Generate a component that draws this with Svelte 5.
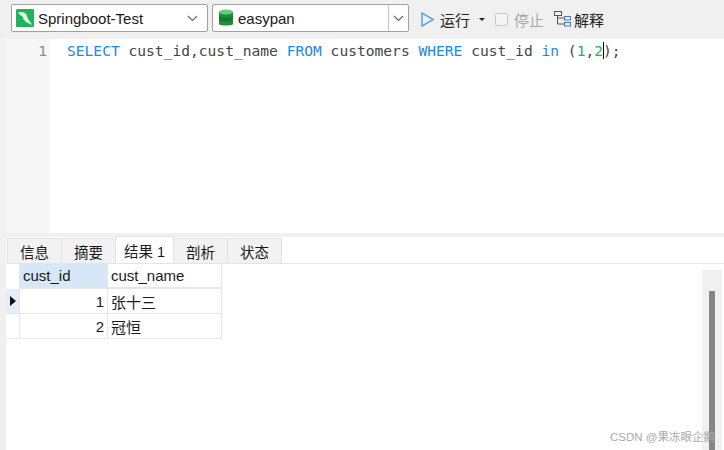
<script>
    const tabs = ["信息", "摘要", "结果 1", "剖析", "状态"];
    const activeTab = "结果 1";

    const rows = [
        { id: 1, name: "张十三", current: true },
        { id: 2, name: "冠恒", current: false },
    ];
</script>

<div class="window">
    <div class="toolbar">
        <div class="select conn-select">
            <svg class="select-icon" width="18" height="18" viewBox="0 0 18 18">
                <rect width="18" height="18" rx="1" fill="#1fb45a" />
                <path
                    d="M2 4c3-2 6-1 8 1 1 1 1 3 2 5 1 2 3 3 4 6-2-1-4-2-6-3-2-2-3-3-3-5C6 7 4 6 2 4z"
                    fill="#e8f8ee"
                />
            </svg>
            <span class="select-label">Springboot-Test</span>
            <svg class="chevron" width="11" height="7" viewBox="0 0 11 7">
                <path d="M1 1l4.5 4.5L10 1" fill="none" stroke="#666" stroke-width="1.1" />
            </svg>
        </div>
        <div class="select db-select">
            <svg class="select-icon" width="16" height="18" viewBox="0 0 16 18">
                <path d="M1 3h14v12c0 2-14 2-14 0z" fill="#1f8f3c" />
                <path d="M1 7c2 2 12 2 14 0v4c-2 2-12 2-14 0z" fill="#157a30" />
                <ellipse cx="8" cy="3" rx="7" ry="2.6" fill="#5fd07a" />
            </svg>
            <span class="select-label">easypan</span>
            <span class="db-arrow">
                <svg class="chevron" width="11" height="7" viewBox="0 0 11 7">
                    <path d="M1 1l4.5 4.5L10 1" fill="none" stroke="#666" stroke-width="1.1" />
                </svg>
            </span>
        </div>
        <div class="actions">
            <button class="action run">
                <svg width="13" height="15" viewBox="0 0 13 15">
                    <path d="M1 1l11 6.5L1 14z" fill="none" stroke="#3d97e8" stroke-width="1.3" />
                </svg>
                运行
            </button>
            <span class="run-caret"></span>
            <button class="action stop">
                <span class="stop-box"></span>
                停止
            </button>
            <button class="action explain">
                <svg width="17" height="16" viewBox="0 0 17 16">
                    <g fill="none" stroke="#555" stroke-width="1">
                        <rect x="0.5" y="0.5" width="7" height="4" />
                        <rect x="10.5" y="5.5" width="6" height="3.5" stroke="#3d7fb8" />
                        <rect x="10.5" y="11.5" width="6" height="3.5" stroke="#3d7fb8" />
                        <path d="M3.5 5v8h7M3.5 7h7" />
                    </g>
                </svg>
                解释
            </button>
        </div>
    </div>

    <div class="editor">
        <div class="gutter">1</div>
        <div class="code">
            <span class="kw">SELECT</span> cust_id,cust_name <span class="kw">FROM</span> customers <span class="kw">WHERE</span> cust_id <span class="kw">in</span> (<span class="num">1</span>,<span class="num caret">2</span>);
        </div>
    </div>

    <div class="results">
        <div class="tabs">
            {#each tabs as tab}
                <div class="tab" class:active={tab === activeTab}>{tab}</div>
            {/each}
        </div>
        <div class="result-body">
            <div class="grid">
                <div class="grid-row head">
                    <div class="marker"></div>
                    <div class="cell id-cell">cust_id</div>
                    <div class="cell name-cell">cust_name</div>
                </div>
                {#each rows as row}
                    <div class="grid-row">
                        <div class="marker" class:current={row.current}>
                            {#if row.current}
                                <span class="pointer"></span>
                            {/if}
                        </div>
                        <div class="cell id-cell num-cell">{row.id}</div>
                        <div class="cell name-cell">{row.name}</div>
                    </div>
                {/each}
            </div>
            <div class="scrollbar">
                <div class="thumb"></div>
            </div>
        </div>
    </div>

    <div class="watermark">CSDN @果冻眼企鹅</div>
</div>

<style>
    :global(body) {
        margin: 0;
    }

    .window {
        position: relative;
        width: 724px;
        height: 450px;
        overflow: hidden;
        display: flex;
        flex-direction: column;
        background: #f0f0f0;
        font-family: "Liberation Sans", "Noto Sans CJK SC", sans-serif;
        color: #1a1a1a;
    }

    .toolbar {
        height: 39px;
        flex-shrink: 0;
        display: flex;
        align-items: flex-start;
        padding: 4px 0 0 11px;
        gap: 4px;
        box-sizing: border-box;
    }

    .select {
        height: 28px;
        box-sizing: border-box;
        display: flex;
        align-items: center;
        background: #fff;
        border: 1px solid #a0a0a0;
        border-radius: 2px;
        font-size: 15px;
        position: relative;
    }

    .conn-select {
        width: 197px;
        padding-left: 4px;
    }

    .db-select {
        width: 197px;
        padding-left: 5px;
    }

    .select-label {
        margin-left: 4px;
        flex: 1;
    }

    .conn-select .chevron {
        margin-right: 9px;
    }

    .db-arrow {
        width: 19px;
        height: 100%;
        display: flex;
        align-items: center;
        justify-content: center;
        border-left: 1px solid #c4c4c4;
    }

    .actions {
        display: flex;
        align-items: center;
        height: 30px;
        margin-left: 8px;
        font-size: 15px;
    }

    .action {
        display: flex;
        align-items: center;
        gap: 6px;
        border: none;
        background: none;
        padding: 0;
        font: inherit;
        color: #222;
    }

    .run-caret {
        margin: 0 10px 0 9px;
        border-left: 3px solid transparent;
        border-right: 3px solid transparent;
        border-top: 3px solid #222;
    }

    .stop {
        color: #a8a8a8;
        margin-right: 10px;
    }

    .stop-box {
        width: 11px;
        height: 11px;
        border: 1px solid #c8c8c8;
        border-radius: 2px;
        background: #f4f4f4;
    }

    .explain {
        gap: 3px;
    }

    .editor {
        height: 194px;
        margin-left: 6px;
        flex-shrink: 0;
        display: flex;
        background: #fff;
    }

    .gutter {
        width: 44px;
        flex-shrink: 0;
        box-sizing: border-box;
        padding: 2px 3px 0 0;
        background: #f6f6f6;
        text-align: right;
        font: 14.6px/20px "DejaVu Sans Mono", monospace;
        color: #8a8a8a;
    }

    .code {
        padding: 2px 0 0 17px;
        font: 14.6px/20px "DejaVu Sans Mono", monospace;
        color: #444;
        white-space: pre;
    }

    .kw {
        color: #1e88e5;
    }

    .num {
        color: #12b76a;
    }

    .caret {
        box-shadow: 1px 0 0 #000;
    }

    .results {
        flex: 1;
        margin-left: 6px;
        margin-top: 4px;
        display: flex;
        flex-direction: column;
        min-height: 0;
    }

    .tabs {
        display: flex;
        height: 27px;
        flex-shrink: 0;
        box-sizing: border-box;
        padding-left: 1px;
        align-items: flex-end;
        background: #fff;
        border-bottom: 1px solid #e4e4e4;
    }

    .tab {
        height: 25px;
        width: 55px;
        box-sizing: border-box;
        display: flex;
        align-items: center;
        justify-content: center;
        background: #f2f2f2;
        border: 1px solid #e2e2e2;
        border-bottom: none;
        font-size: 14.5px;
        margin-right: -1px;
    }

    .active {
        height: 27px;
        width: 59px;
        background: #fff;
    }

    .result-body {
        flex: 1;
        display: flex;
        background: #fff;
        min-height: 0;
    }

    .grid {
        flex: 1;
    }

    .grid-row {
        display: flex;
        height: 25px;
        box-sizing: border-box;
    }

    .head .cell {
        border-bottom-width: 2px;
    }

    .marker {
        width: 14px;
        box-sizing: border-box;
        border-right: 1px solid #e6e6e6;
        border-bottom: 1px solid #e6e6e6;
        display: flex;
        align-items: center;
        justify-content: center;
    }

    .head .marker {
        border-bottom: none;
    }

    .current {
        background: #e3eef8;
    }

    .pointer {
        border-top: 5px solid transparent;
        border-bottom: 5px solid transparent;
        border-left: 6px solid #111;
    }

    .cell {
        box-sizing: border-box;
        height: 100%;
        display: flex;
        align-items: center;
        padding: 0 3px;
        font-size: 15px;
        border-right: 1px solid #e6e6e6;
        border-bottom: 1px solid #e6e6e6;
    }

    .id-cell {
        width: 88px;
    }

    .head .id-cell {
        background: #d6e8f7;
    }

    .name-cell {
        width: 114px;
    }

    .num-cell {
        justify-content: flex-end;
    }

    .scrollbar {
        width: 20px;
        margin-top: 6px;
        margin-right: 2px;
        background: #f0f0f0;
        flex-shrink: 0;
        padding-top: 21px;
        box-sizing: border-box;
        display: flex;
        justify-content: center;
    }

    .thumb {
        width: 6px;
        height: 100%;
        background: #868686;
    }

    .watermark {
        position: absolute;
        right: 9px;
        bottom: 6px;
        font-size: 11.5px;
        color: #aaa;
    }
</style>
